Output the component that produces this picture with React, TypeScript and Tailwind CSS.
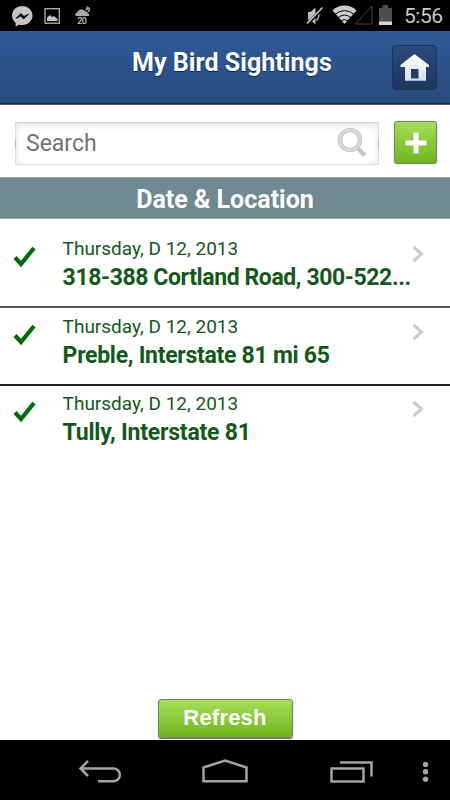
import React from 'react';

interface SightingProps {
    date: string;
    place: string;
    height: string;
    border: string;
    placeClass: string;
}

const sightings: SightingProps[] = [
    {
        date: 'Thursday, D 12, 2013',
        place: '318-388 Cortland Road, 300-522...',
        height: 'h-[90px] pt-[18px]',
        border: 'border-b-2 border-[#555]',
        placeClass: 'tracking-[-0.4px]',
    },
    {
        date: 'Thursday, D 12, 2013',
        place: 'Preble, Interstate 81 mi 65',
        height: 'h-[78px] pt-[6px]',
        border: 'border-b-2 border-[#222]',
        placeClass: 'tracking-[-0.28px]',
    },
    {
        date: 'Thursday, D 12, 2013',
        place: 'Tully, Interstate 81',
        height: 'h-[77px] pt-[5px]',
        border: '',
        placeClass: 'tracking-[-0.2px]',
    },
];

const StatusBar: React.FC = () => (
    <div className="flex h-[31px] shrink-0 items-center bg-black">
        <svg width="100" height="31" viewBox="0 0 100 31">
            <path d="M22.300 6C16.500 6 12 10.200 12 15.600c0 3 1.200 5.300 3.600 7.200V26.500l3.600-1.800c1 .3 2 .4 3.100.4 5.700 0 10.200-4.200 10.200-9.500S28 6 22.300 6z" fill="#c4c4c4" />
            <path d="M16 18.500 20.800 13.500l3.200 3 4.500-2.500-4.800 5-3.200-3z" fill="#000" stroke="#000" strokeWidth="0.800" />
            <rect x="45" y="8.700" width="14.300" height="14.500" fill="none" stroke="#b5b5b5" strokeWidth="1.300" />
            <path d="M47 21v-3.500l3-2.500 2 2 2-1 3.500 3V21z" fill="#c4c4c4" />
            <path d="M76 16a2 2 0 0 1 1-3.500 4.500 4.500 0 0 1 8-1.200q3-.2 3 2.200a2 2 0 0 1 1 2.500z" fill="#aaa" />
            <path d="M85.500 9.500c1.500 0 2.500-1 2-2 2.500 1 2.500 3 .5 4" fill="none" stroke="#aaa" strokeWidth="1.500" />
            <text x="77.300" y="24" fill="#c5c5c5" fontFamily="Roboto, sans-serif" fontSize="9" fontWeight="500" textLength="9.500">20</text>
        </svg>
        <svg className="ml-auto" width="102" height="31" viewBox="0 0 102 31">
            <path d="M12 12h2.500l5-4.500v17l-5-4.500H12z" fill="#bbb" />
            <path d="M21.500 12q3 4-1 9" fill="none" stroke="#aaa" strokeWidth="1.500" />
            <path d="m11.500 24 15-16" stroke="#000" strokeWidth="3" />
            <path d="m11 23.500 15.500-16" stroke="#ccc" strokeWidth="1.500" />
            <path d="M36.500 10.500a17 17 0 0 1 24 0L48.500 24z" fill="#ccc" />
            <path d="M39 14.300q9.500-7.500 19 0M42 17.600q6.500-5 13 0M45 20.800q3.500-2.500 7 0" fill="none" stroke="#000" strokeWidth="1" />
            <path d="M59.500 24 76 6v18z" fill="none" stroke="#444" />
            <path d="M83 8h3.500V5H92v3h4v17H83z" fill="#4d4d4d" />
            <path d="M83 21.500h13V25H83z" fill="#d5d5d5" />
        </svg>
        <span className="ml-[6px] w-[46px] whitespace-nowrap pt-px text-[21px] leading-[31px] tracking-[-0.500px] text-[#c8c8c8]">5:56</span>
    </div>
);

const Header: React.FC = () => (
    <header className="flex h-[74px] shrink-0 border-b border-[#555] bg-linear-to-b from-[#2f5b99] to-[#284a7c] shadow-[inset_0_-1px_0_#1c2940]">
        <h1 className="ml-[132px] w-[260px] whitespace-nowrap pt-[17px] text-[25px] leading-[30px] font-bold tracking-[0.050px] text-white [text-shadow:0_1px_1px_#102050]">
            My Bird Sightings
        </h1>
        <button className="mt-[14px] flex h-[45px] w-[45px] items-center justify-center rounded-[4px] border border-[#1b3457] bg-linear-to-b from-[#294b7b] to-[#1d365e]">
            <svg width="32" height="32" viewBox="0 0 32 32">
                <defs>
                    <linearGradient id="house" x2="0" y2="1">
                        <stop stopColor="#fff" />
                        <stop offset="1" stopColor="#d9dee5" />
                    </linearGradient>
                </defs>
                <path d="M15.500 2 30 13v2h-3v13.700H6V15H1.500v-2zM12 17v9.500h7.500V17z" fill="url(#house)" fillRule="evenodd" />
            </svg>
        </button>
    </header>
);

const SearchRow: React.FC = () => (
    <div className="flex h-[72px] shrink-0 pt-[17px] pl-[15px]">
        <div className="relative flex h-[43px] w-[364px] items-center justify-between border border-[#dedede] border-t-[#cfcfcf] pr-[9px] pl-[10px] [box-shadow:inset_0_2px_7px_#e4e4e4]">
            <i className="absolute top-4 -left-px h-[9px] w-px bg-[#bbb]" />
            <i className="absolute top-4 -right-px h-[9px] w-px bg-[#bbb]" />
            <span className="text-[23px] leading-[42px] text-[#737373]">Search</span>
            <svg width="32" height="32" viewBox="0 0 32 32" fill="none">
                <path d="m20.500 20 7.500 7.500" stroke="#c8c8c8" strokeWidth="4.500" />
                <circle cx="13" cy="12" r="10" stroke="#c8c8c8" strokeWidth="4.500" />
                <circle cx="13" cy="12" r="10" stroke="#d9d9d9" strokeWidth="2.500" />
            </svg>
        </div>
        <button className="-mt-px ml-[15px] flex h-[43px] w-[43px] items-center justify-center rounded-[3px] border border-[#77836d] bg-linear-to-b from-[#a5df56] to-[#70b41c] shadow-[0_0_1px_#666]">
            <svg width="24" height="24" viewBox="0 0 24 24">
                <path d="M12 1.500v21M1.500 12h21" stroke="#fff" strokeWidth="5" />
            </svg>
        </button>
    </div>
);

const Sighting: React.FC<SightingProps> = ({ date, place, height, border, placeClass }) => (
    <li className={`flex ${height} ${border}`}>
        <svg className="mt-[9px] ml-3 shrink-0" width="26" height="26" viewBox="0 0 26 26">
            <path d="m3 12.500 6 6.500L22 3" fill="none" stroke="#006b08" strokeWidth="4.200" />
        </svg>
        <div className="ml-[24.6px] w-[349.4px] shrink-0 whitespace-nowrap text-[#15581b]">
            <p className="text-[19px] leading-[26px]">{date}</p>
            <p className={`text-[23px] leading-[32px] font-bold ${placeClass}`}>{place}</p>
        </div>
        <svg className="mt-[9px] shrink-0" width="14" height="18" viewBox="0 0 14 18">
            <path d="m1.500 2 8 7-8 7" fill="none" stroke="#cbcbcb" strokeWidth="3" />
        </svg>
    </li>
);

const NavBar: React.FC = () => (
    <nav className="flex h-[60px] shrink-0 bg-black">
        <svg width="450" height="60" viewBox="0 0 450 60" fill="none" stroke="#a3a3a3" strokeWidth="2.500">
            <path d="M80.500 28.500H113.500a6.200 6.200 0 0 1 0 12.700H98M88 21l-7.500 7.500 7.500 7.500" />
            <path d="M203.500 27.500 225 20.500l21.500 7v13.700h-43z" />
            <path d="M331.500 28.500h32v13h-32z" />
            <path d="M340 22.500h31.500v14" />
            <g fill="#a3a3a3" stroke="none">
                <circle cx="425.500" cy="24.500" r="2.700" />
                <circle cx="425.500" cy="31.800" r="2.700" />
                <circle cx="425.500" cy="39.200" r="2.700" />
            </g>
        </svg>
    </nav>
);

const App: React.FC = () => {
    return (
        <main className="flex h-[800px] w-[450px] flex-col overflow-hidden bg-white font-['Roboto',sans-serif]">
            <StatusBar />
            <Header />
            <SearchRow />
            <h2 className="h-[42px] shrink-0 border-y border-[#9aabb2] bg-[#6f8992] text-center text-[25px] leading-[44px] font-bold text-white">
                Date &amp; Location
            </h2>
            <ul className="-mt-px flex-1">
                {sightings.map((item) => (
                    <Sighting key={item.place} {...item} />
                ))}
            </ul>
            <div className="flex h-[41px] shrink-0 justify-center">
                <button className="h-[39px] w-[135px] rounded-[3px] border border-[#75836a] bg-linear-to-b from-[#a5df56] to-[#70b41c] pb-0.5 font-['Liberation_Sans',sans-serif] text-[22px] leading-[35px] font-bold tracking-[0.200px] text-white shadow-[0_1px_1px_#666]">
                    Refresh
                </button>
            </div>
            <NavBar />
        </main>
    );
};
export default App;
